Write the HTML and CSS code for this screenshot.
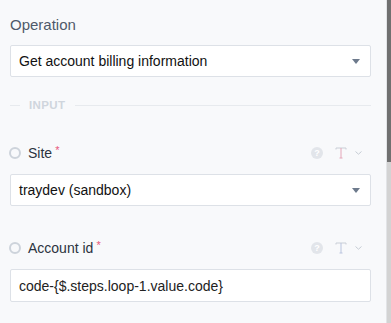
FILE: index.html
```html
<!DOCTYPE html>
<html lang="en">
<head>
    <meta charset="UTF-8">
    <meta name="viewport" content="width=device-width, initial-scale=1.0">
    <title>Operation</title>
    <link rel="stylesheet" href="styles.css">
</head>
<body>
    <div class="layout">
        <div class="panel">
            <div class="label">Operation</div>
            <div class="select">
                <span>Get account billing information</span>
                <span class="caret"></span>
            </div>

            <div class="divider">
                <span class="divider-line short"></span>
                <span class="divider-text">INPUT</span>
                <span class="divider-line"></span>
            </div>

            <div class="field-row site-row">
                <span class="radio"></span>
                <span class="field-name">Site</span>
                <span class="required">*</span>
                <div class="tools">
                    <span class="help">?</span>
                    <svg class="type-icon" width="12" height="12" viewBox="0 0 12 12">
                        <path d="M1 2.5 V1 H11 V2.5" fill="none" stroke="#c9ced6" stroke-width="1"/>
                        <path d="M6 1 V11 M4.5 11 H7.5" fill="none" stroke="#e4a6b8" stroke-width="1"/>
                    </svg>
                    <svg class="chevron" width="7" height="4" viewBox="0 0 7 4">
                        <path d="M0.5 0.5 L3.5 3.2 L6.5 0.5" fill="none" stroke="#c6ccd4" stroke-width="1"/>
                    </svg>
                </div>
            </div>
            <div class="select">
                <span>traydev (sandbox)</span>
                <span class="caret"></span>
            </div>

            <div class="field-row account-row">
                <span class="radio"></span>
                <span class="field-name">Account id</span>
                <span class="required">*</span>
                <div class="tools">
                    <span class="help">?</span>
                    <svg class="type-icon" width="12" height="12" viewBox="0 0 12 12">
                        <path d="M1 2.5 V1 H11 V2.5" fill="none" stroke="#c9ced6" stroke-width="1"/>
                        <path d="M6 1 V11 M4.5 11 H7.5" fill="none" stroke="#b9c4de" stroke-width="1"/>
                    </svg>
                    <svg class="chevron" width="7" height="4" viewBox="0 0 7 4">
                        <path d="M0.5 0.5 L3.5 3.2 L6.5 0.5" fill="none" stroke="#c6ccd4" stroke-width="1"/>
                    </svg>
                </div>
            </div>
            <div class="text-input">code-{$.steps.loop-1.value.code}</div>
        </div>
        <div class="scrollbar">
            <div class="thumb"></div>
        </div>
    </div>
</body>
</html>
```

FILE: styles.css
```css
body {
    margin: 0;
    background-color: #f8f9fb;
    font-family: 'Liberation Sans', Arial, sans-serif;
    font-size: 14px;
    color: #222;
    height: 323px;
    overflow: hidden;
}
.layout {
    display: flex;
    height: 323px;
}
.panel {
    flex: 1;
    padding: 16px 15px 0 10px;
}
.label {
    font-size: 15px;
    line-height: 17px;
    color: #4f5a6a;
    margin-bottom: 12px;
}
.select,
.text-input {
    height: 32px;
    box-sizing: border-box;
    background-color: #fff;
    border: 1px solid #dde1e7;
    border-radius: 2px;
    display: flex;
    align-items: center;
    padding: 0 10px 0 8px;
    color: #111;
}
.select span:first-child {
    flex: 1;
}
.caret {
    width: 0;
    height: 0;
    border-left: 4.5px solid transparent;
    border-right: 4.5px solid transparent;
    border-top: 5px solid #6d7a8c;
}
.divider {
    display: flex;
    align-items: center;
    height: 14px;
    margin-top: 21px;
}
.divider-line {
    flex: 1;
    height: 1px;
    background-color: #e7eaee;
}
.divider-line.short {
    flex: none;
    width: 10px;
}
.divider-text {
    font-size: 11.5px;
    font-weight: bold;
    color: #cfd5dd;
    padding: 0 9px;
    letter-spacing: 0.4px;
}
.field-row {
    display: flex;
    align-items: center;
    height: 20px;
    margin-bottom: 11px;
}
.site-row {
    margin-top: 31px;
}
.account-row {
    margin-top: 32px;
}
.radio {
    width: 8px;
    height: 8px;
    border: 2px solid #cdd3db;
    border-radius: 50%;
    margin-right: 7px;
    margin-left: -1px;
}
.field-name {
    color: #2b3340;
}
.required {
    color: #e8577a;
    font-size: 11px;
    align-self: flex-start;
    margin-left: 3px;
    margin-top: 1px;
}
.tools {
    margin-left: auto;
    display: flex;
    align-items: center;
    padding-right: 9px;
}
.help {
    width: 12px;
    height: 12px;
    border-radius: 50%;
    background-color: #e2e5ea;
    color: #fff;
    font-size: 9px;
    font-weight: bold;
    line-height: 12px;
    text-align: center;
    margin-right: 12px;
}
.type-icon {
    margin-right: 8px;
}
.text-input {
    height: 33px;
    color: #222;
}
.scrollbar {
    width: 4px;
    border-left: 1px solid #e2e4e7;
    background-color: #d3d3d3;
}
.thumb {
    height: 162px;
    background-color: #707070;
}
```
